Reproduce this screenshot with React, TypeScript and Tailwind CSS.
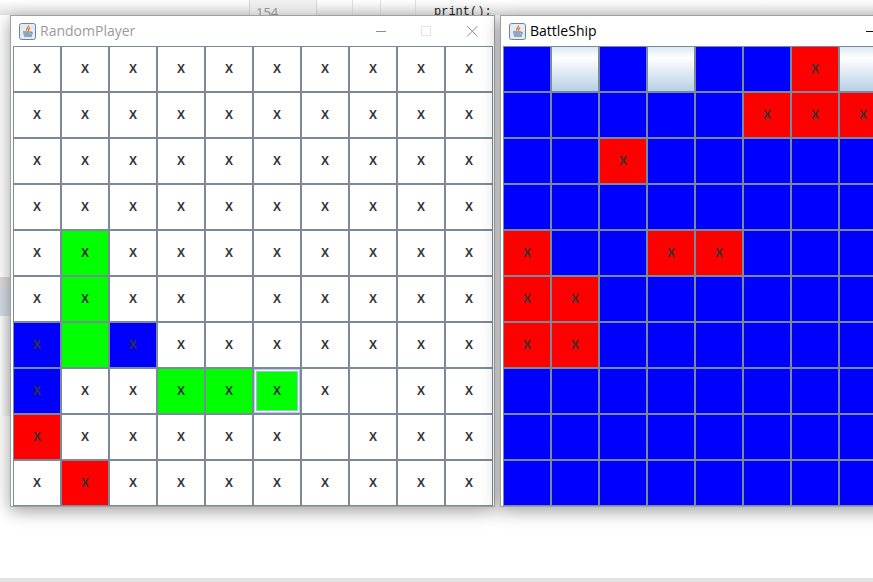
// Two Swing "battleship" windows sitting on top of an IDE

const LEFT_BOARD = [
  "..........",
  "..........",
  "..........",
  "..........",
  ".g........",
  ".g.._.....",
  "bGb.......",
  "b..ggf._..",
  "r....._...",
  ".r........",
];

const RIGHT_BOARD = [
  "BuBuBBruBB",
  "BBBBBrrrBB",
  "BBrBBBBBBB",
  "BBBBBBBBBB",
  "rBBrrBBBBB",
  "rrBBBBBBBB",
  "rrBBBBBBBB",
  "BBBBBBBBBB",
  "BBBBBBBBBB",
  "BBBBBBBBBB",
];

const cellStyles: Record<string, string> = {
  ".": "bg-white text-[#333333]",
  _: "bg-white",
  g: "bg-[#00ff00] text-[#333333]",
  G: "bg-[#00ff00]",
  f: "bg-[#00ff00] text-[#333333] shadow-[inset_0_0_0_1px_#b8cfe5,inset_0_0_0_2px_#eef3f8,inset_0_0_0_3px_#a3bdd8]",
  b: "bg-[#0000ff] text-[#333333]",
  B: "bg-[#0000ff]",
  r: "bg-[#ff0000] text-[#333333]",
  u: "bg-gradient-to-b from-[#dde8f3] via-[#ffffff] via-[25%] to-[#b8cfe5]",
};

function Cell({ code }: { code: string }) {
  const hasMark = code !== "_" && code !== "G" && code !== "B" && code !== "u";
  return (
    <div
      className={`flex items-center justify-center border border-[#7a8a99] text-[12px] font-bold font-['Liberation_Sans',sans-serif] ${cellStyles[code]}`}
    >
      {hasMark ? "X" : ""}
    </div>
  );
}

function JavaIcon() {
  return (
    <svg width="17" height="17" viewBox="0 0 17 17" className="shrink-0">
      <rect x="0.5" y="0.5" width="16" height="16" rx="2" fill="#e4ebf2" stroke="#6f8498" />
      <path d="M9.5 2.5C10 4.5 7 5 7.5 7.5M11 4.5C10.5 6 9 6 9.5 8" fill="none" stroke="#e2701a" strokeWidth="1.2" />
      <path d="M4 9h8M4.5 11h7M5 13h8" fill="none" stroke="#3c6285" strokeWidth="1.1" />
      <path d="M12 9.2c2 0 2 2-0.5 2.2" fill="none" stroke="#3c6285" strokeWidth="0.9" />
    </svg>
  );
}

function TitleBar({ title, dimmed }: { title: string; dimmed?: boolean }) {
  return (
    <div className="flex h-[30px] items-center pl-[8px]">
      <JavaIcon />
      <span
        className={`ml-[4px] mb-[2px] font-['Open_Sans',sans-serif] text-[14px] ${dimmed ? "text-[#9b9b9b]" : "text-black"}`}
      >
        {title}
      </span>
      <div className="ml-auto mr-[5px] flex shrink-0 items-center">
        <svg width="120" height="14" viewBox="0 0 120 14">
          <path d="M7 7.5h10" stroke={dimmed ? "#8f8f8f" : "#111111"} strokeWidth="1" />
          {dimmed && <rect x="52.5" y="2.5" width="9" height="9" fill="none" stroke="#e4e4e4" />}
          {dimmed && <path d="M98 2l10.5 10.5M108.5 2L98 12.5" stroke="#8f8f8f" strokeWidth="1" />}
        </svg>
      </div>
    </div>
  );
}

function BoardWindow({
  title,
  board,
  dimmed,
  className,
}: {
  title: string;
  board: string[];
  dimmed?: boolean;
  className: string;
}) {
  return (
    <div
      className={`absolute top-[15px] h-[492px] border border-[#a0a0a0] bg-white shadow-[0_4px_16px_rgba(0,0,0,0.38)] ${className}`}
    >
      <TitleBar title={title} dimmed={dimmed} />
      <div className="pl-[2px]">
        <div className="grid w-[480px] grid-cols-[repeat(10,48px)] auto-rows-[46px]">
          {board.flatMap((row, y) =>
            row.split("").map((code, x) => <Cell key={`${y}-${x}`} code={code} />),
          )}
        </div>
      </div>
    </div>
  );
}

export default function App() {
  return (
    <div className="relative h-[582px] w-[873px] overflow-hidden bg-white">
      {/* IDE behind the windows */}
      <div className="flex h-[15px] overflow-hidden bg-gradient-to-b from-[#ffffff] to-[#e4e4e4]">
        <div className="ml-[249px] h-full w-[68px] border-x border-[#d4d4d4] bg-[#f0f0f0] pl-[6px] font-['Open_Sans',sans-serif] text-[13px] leading-[24px] text-[#999999]">
          154
        </div>
        <div className="h-full w-[36px] border-r border-[#dddddd]" />
        <div className="h-full w-[28px] border-r border-[#dddddd]" />
        <div className="h-full w-[35px] border-r border-[#dddddd]" />
        <div className="pl-[18px] font-['Liberation_Mono',monospace] text-[12px] leading-[24px] text-[#222222]">
          print();
        </div>
      </div>
      <div className="absolute bottom-0 left-0 right-0 h-[4px] bg-[#e3e3e3]" />
      <div className="absolute left-0 top-[277px] h-[12px] w-[12px] bg-[#dcdcdc]" />
      <div className="absolute left-0 top-[289px] h-[27px] w-[12px] bg-[#d5dce5]" />
      <div className="absolute left-0 top-[316px] h-[100px] w-[12px] bg-gradient-to-r from-[#ffffff] to-[#e8e8e8]" />

      <BoardWindow title="RandomPlayer" board={LEFT_BOARD} dimmed className="left-[10px] w-[485px]" />
      <BoardWindow title="BattleShip" board={RIGHT_BOARD} className="left-[500px] w-[485px]" />
    </div>
  );
}
